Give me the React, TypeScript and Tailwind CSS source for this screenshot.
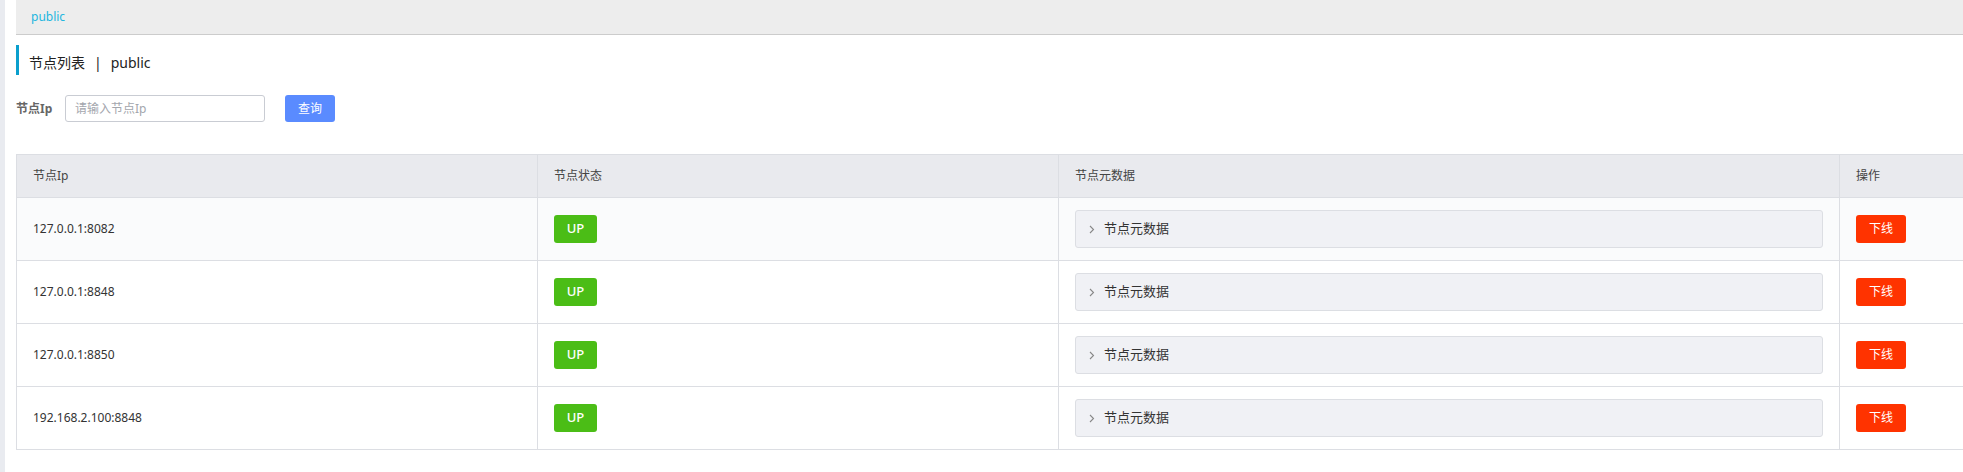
import React from 'react';

const font = { fontFamily: '"Noto Sans", "Noto Sans CJK SC", sans-serif' };

const nodes = [
  { ip: '127.0.0.1:8082', state: 'UP' },
  { ip: '127.0.0.1:8848', state: 'UP' },
  { ip: '127.0.0.1:8850', state: 'UP' },
  { ip: '192.168.2.100:8848', state: 'UP' },
];

const cols = 'grid grid-cols-[520px_521px_781px_1fr]';

const Chevron = () => (
  <svg width="6" height="9" viewBox="0 0 6 9" className="text-[#888]">
    <path d="M1 1l3.5 3.5L1 8" fill="none" stroke="currentColor" strokeWidth="1.1" />
  </svg>
);

export default function App() {
  return (
    <div
      className="w-[1963px] h-[472px] bg-white flex overflow-hidden text-[#333]"
      style={font}
    >
      <div className="w-[5px] h-full bg-[#e9ebf0] shrink-0" />
      <div className="flex-1 ml-[11px] flex flex-col">
        {/* breadcrumb header */}
        <div className="h-[35px] bg-[#ededed] border-b border-[#cccccc] flex items-center pl-[15px]">
          <span className="text-[12px] text-[#22b6df]">public</span>
        </div>

        {/* title */}
        <div className="mt-[10px] h-[30px] border-l-[3px] border-[#0a9fcd] flex items-center pl-[10px] pt-[5px] text-[14px] text-[#222]">
          节点列表<span className="mx-[9px]">|</span>public
        </div>

        {/* search */}
        <div className="mt-[20px] flex items-center h-[27px]">
          <span className="text-[12px] font-bold text-[#666] w-[49px]">节点Ip</span>
          <input
            placeholder="请输入节点Ip"
            className="w-[200px] h-[27px] border border-[#c9ccd3] rounded-[3px] px-[9px] text-[12px] placeholder:text-[#a3a6ad] outline-none"
          />
          <button className="ml-[20px] w-[50px] h-[27px] rounded-[3px] bg-[#5a8bff] text-white text-[12px]">
            查询
          </button>
        </div>

        {/* table */}
        <div className="mt-[32px] border border-[#dcdee3] border-r-0">
          <div className={`${cols} h-[42px] bg-[#e9eaee] text-[12px] text-[#444]`}>
            <div className="flex items-center pl-[16px]">节点Ip</div>
            <div className="flex items-center pl-[16px] border-l border-[#dcdee3]">节点状态</div>
            <div className="flex items-center pl-[16px] border-l border-[#dcdee3]">节点元数据</div>
            <div className="flex items-center pl-[16px] border-l border-[#dcdee3]">操作</div>
          </div>
          {nodes.map((n, i) => (
            <div
              key={n.ip}
              className={`${cols} h-[63px] border-t border-[#dcdee3] text-[12px] ${i === 0 ? 'bg-[#fafbfc]' : 'bg-white'}`}
            >
              <div className="flex items-center pl-[16px] text-[#333]">{n.ip}</div>
              <div className="flex items-center pl-[16px] border-l border-[#dcdee3]">
                <span className="w-[43px] h-[28px] rounded-[3px] bg-[#4bbd16] text-white text-[13px] font-medium flex items-center justify-center">
                  {n.state}
                </span>
              </div>
              <div className="flex items-center pl-[16px] pr-[16px] border-l border-[#dcdee3]">
                <div className="w-[748px] h-[38px] rounded-[3px] border border-[#dcdee3] bg-[#f0f1f5] flex items-center pl-[13px] gap-[9px] text-[13px] text-[#333]">
                  <Chevron />
                  节点元数据
                </div>
              </div>
              <div className="flex items-center pl-[16px] border-l border-[#dcdee3]">
                <button className="w-[50px] h-[28px] rounded-[3px] bg-[#ff3300] text-white text-[12px]">
                  下线
                </button>
              </div>
            </div>
          ))}
        </div>
      </div>
    </div>
  );
}
